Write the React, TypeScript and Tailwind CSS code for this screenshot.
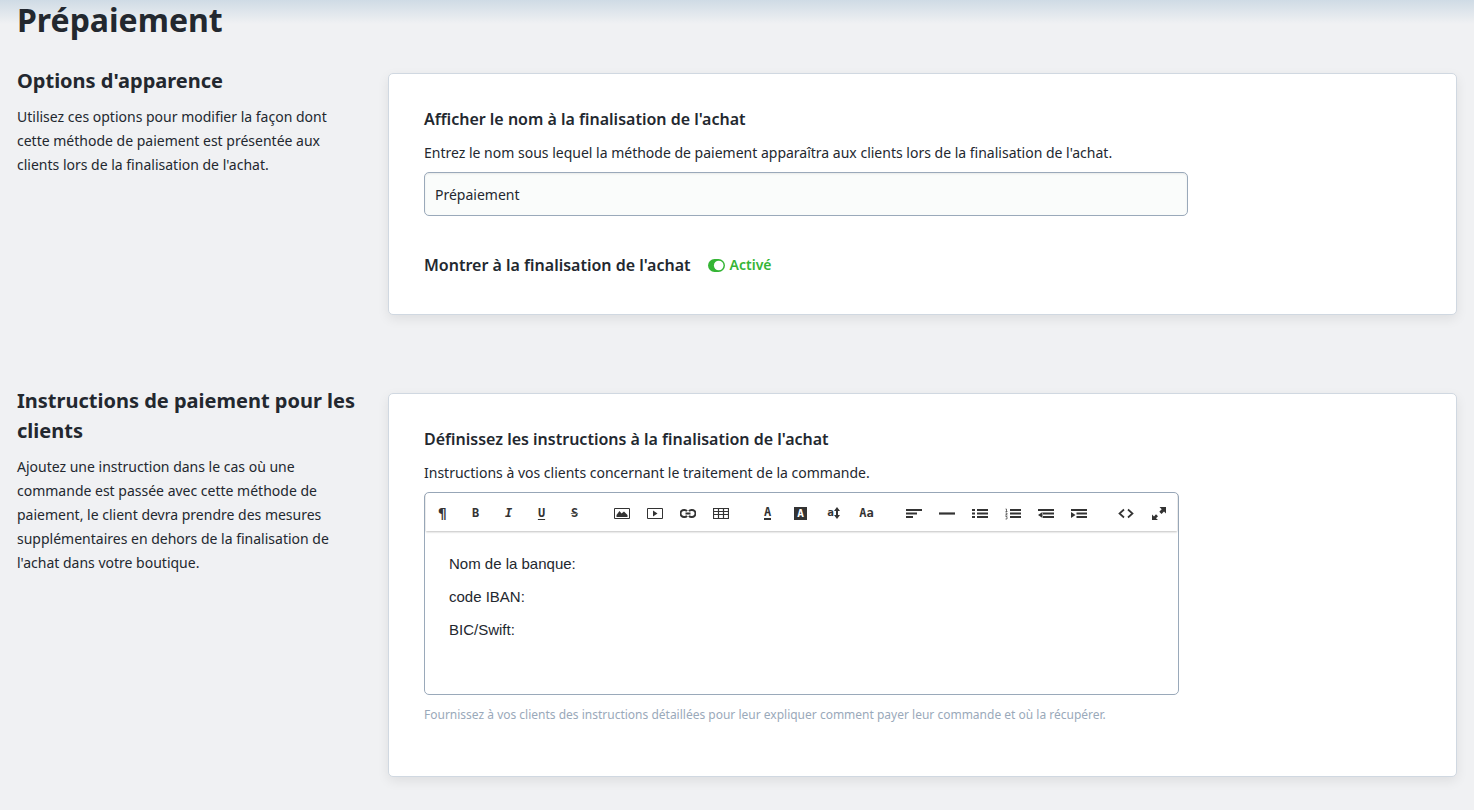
import React from 'react';

type BlocProps = {
  titre: string;
  description: string;
  children: React.ReactNode;
};

function Bloc({ titre, description, children }: BlocProps) {
  return (
    <section className="flex flex-col gap-4 lg:flex-row lg:gap-6">
      <div className="shrink-0 lg:w-[347px]">
        <h2 className="mt-[-7px] text-[20px] font-bold leading-[30px]">{titre}</h2>
        <p className="mt-[9px] pr-4 text-[14px] leading-6">{description}</p>
      </div>
      <div className="min-w-0 flex-1 rounded-[5px] border border-[#d0d8e1] bg-white px-[35px] pt-[33px] shadow-[0_4px_12px_rgba(0,0,0,0.08)]">
        {children}
      </div>
    </section>
  );
}

function Icone({ children }: { children: React.ReactNode }) {
  return (
    <svg className="h-4 w-4" viewBox="0 0 16 16" fill="none" stroke="#333" aria-hidden="true">
      {children}
    </svg>
  );
}

const mono = "font-['DejaVu_Sans_Mono',monospace] font-bold";

const groupes = [
  [
    { nom: 'Format', icone: <span className={`${mono} text-[14px] leading-4`}>¶</span> },
    { nom: 'Gras', icone: <span className={`${mono} text-[12px] leading-4`}>B</span> },
    { nom: 'Italique', icone: <span className={`${mono} text-[12px] leading-4 italic`}>I</span> },
    { nom: 'Souligné', icone: <span className={`${mono} text-[12px] leading-4 underline underline-offset-2`}>U</span> },
    {
      nom: 'Barré',
      icone: <span className={`${mono} text-[12px] leading-4 line-through decoration-[#777] decoration-1`}>S</span>,
    },
  ],
  [
    {
      nom: 'Image',
      icone: (
        <Icone>
          <path d="M.5 3.500h15v10H.5z" />
          <path d="M2.500 12v-2l3-4 2 2.500L10 6.500l3.500 3.500v2z" fill="#333" stroke="none" />
        </Icone>
      ),
    },
    {
      nom: 'Vidéo',
      icone: (
        <Icone>
          <path d="M.5 3.500h15v10H.5z" />
          <path d="M6 5.500v6l4.500-3z" fill="#333" stroke="none" />
        </Icone>
      ),
    },
    {
      nom: 'Lien',
      icone: (
        <Icone>
          <path
            d="M7 6.200A3 3 0 0 0 4.500 5h-.5a3.500 3.500 0 0 0 0 7h.5A3 3 0 0 0 7 10.800M9 6.200A3 3 0 0 1 11.500 5h.5a3.500 3.500 0 0 1 0 7h-.5A3 3 0 0 1 9 10.800M5.500 8.500h5"
            strokeWidth="2"
          />
        </Icone>
      ),
    },
    {
      nom: 'Tableau',
      icone: (
        <Icone>
          <path d="M.5 3.500h15v10H.5zM.5 6.500h15M.5 9.500h15M5.500 3v11M10.500 3v11" strokeWidth="1.200" />
        </Icone>
      ),
    },
  ],
  [
    {
      nom: 'Couleur du texte',
      icone: <span className={`${mono} border-b-2 border-[#333] text-[12px] leading-[11px]`}>A</span>,
    },
    {
      nom: 'Couleur du fond',
      icone: <span className={`${mono} bg-[#333] px-[3px] text-[11px] leading-[13px] text-white`}>A</span>,
    },
    {
      nom: 'Taille',
      icone: (
        <span className={`${mono} flex items-center text-[11px] leading-4`}>
          a
          <svg className="h-3 w-[6px]" viewBox="0 0 6 12" fill="#333" aria-hidden="true">
            <path d="M3 0l3 4H4v4h2l-3 4-3-4h2V4H0z" />
          </svg>
        </span>
      ),
    },
    { nom: 'Casse', icone: <span className={`${mono} text-[12px] leading-4`}>Aa</span> },
  ],
  [
    {
      nom: 'Alignement',
      icone: (
        <Icone>
          <path d="M0 5h16M0 8.500h11M0 12h7" strokeWidth="2.200" />
        </Icone>
      ),
    },
    {
      nom: 'Ligne',
      icone: (
        <Icone>
          <path d="M0 8.500h16" strokeWidth="2.200" />
        </Icone>
      ),
    },
    {
      nom: 'Liste à puces',
      icone: (
        <Icone>
          <path d="M0 5h3M0 8.500h3M0 12h3M5 5h11M5 8.500h11M5 12h11" strokeWidth="2.200" />
        </Icone>
      ),
    },
    {
      nom: 'Liste numérotée',
      icone: (
        <Icone>
          <path d="M5 5h11M5 8.500h11M5 12h11" strokeWidth="2.200" />
          <path d="M.5 4h1v2.500M.5 6.500h2M.5 8h1.500v1L.5 10h2M.5 11.500H2V14H.500" strokeWidth=".7" />
        </Icone>
      ),
    },
    {
      nom: 'Diminuer le retrait',
      icone: (
        <Icone>
          <path d="M0 5h16M5 8.500h11M5 12h11" strokeWidth="2.200" />
          <path d="M4.500 7v6L0 10z" fill="#333" stroke="none" />
        </Icone>
      ),
    },
    {
      nom: 'Augmenter le retrait',
      icone: (
        <Icone>
          <path d="M0 5h16M5.500 8.500H16M5.500 12H16" strokeWidth="2.200" />
          <path d="M0 7v6l4.500-3z" fill="#333" stroke="none" />
        </Icone>
      ),
    },
  ],
  [
    {
      nom: 'Code source',
      icone: (
        <Icone>
          <path d="M6 4.500l-4.500 4 4.500 4M10 4.500l4.500 4-4.500 4" strokeWidth="1.700" />
        </Icone>
      ),
    },
    {
      nom: 'Plein écran',
      icone: (
        <Icone>
          <path
            d="M8.500 2H15v6.500l-2-2L10.500 9 8.300 6.800 10.700 4.300zM1 9.500l2 2L5 9.300 7 11.300 5 13.300 7 15H1z"
            fill="#333"
            stroke="none"
          />
        </Icone>
      ),
    },
  ],
];

export default function App() {
  return (
    <main className="min-h-screen bg-[#f0f1f3] bg-[linear-gradient(#cfdbe5,#f0f1f3)] bg-[length:100%_24px] bg-no-repeat px-[17px] pb-8 font-['Noto_Sans','Segoe_UI',sans-serif] text-[#23282f]">
      <h1 className="text-[32px] font-bold leading-[40px]">Prépaiement</h1>

      <div className="mt-[33px] flex flex-col gap-[78px]">
        <Bloc
          titre="Options d'apparence"
          description="Utilisez ces options pour modifier la façon dont cette méthode de paiement est présentée aux clients lors de la finalisation de l'achat."
        >
          <label htmlFor="nom" className="block text-[16px] font-semibold leading-6">
            Afficher le nom à la finalisation de l'achat
          </label>
          <p className="mt-[10px] text-[14px] leading-6">
            Entrez le nom sous lequel la méthode de paiement apparaîtra aux clients lors de la finalisation de l'achat.
          </p>
          <input
            id="nom"
            type="text"
            defaultValue="Prépaiement"
            className="mt-[7px] block h-11 w-full max-w-[764px] rounded-[5px] border border-[#9aa9ba] bg-[#fafcfb] px-[10px] text-[14px] shadow-[inset_0_1px_2px_rgba(0,0,0,0.08)]"
          />
          <div className="my-[37px] flex items-center gap-[17px]">
            <span className="text-[16px] font-semibold leading-6">Montrer à la finalisation de l'achat</span>
            <label className="flex items-center gap-[5px] text-[14px] font-semibold leading-6 text-[#35b535]">
              <input type="checkbox" defaultChecked className="sr-only" />
              <svg className="h-[13px] w-[17px]" viewBox="0 0 17 13" aria-hidden="true">
                <rect width="17" height="13" rx="6.500" fill="#35b535" />
                <circle cx="10.700" cy="6.500" r="4.800" fill="#fff" />
              </svg>
              Activé
            </label>
          </div>
        </Bloc>

        <Bloc
          titre="Instructions de paiement pour les clients"
          description="Ajoutez une instruction dans le cas où une commande est passée avec cette méthode de paiement, le client devra prendre des mesures supplémentaires en dehors de la finalisation de l'achat dans votre boutique."
        >
          <label htmlFor="instructions" className="block text-[16px] font-semibold leading-6">
            Définissez les instructions à la finalisation de l'achat
          </label>
          <p className="mt-[10px] text-[14px] leading-6">
            Instructions à vos clients concernant le traitement de la commande.
          </p>
          <div className="mt-[7px] max-w-[755px] rounded-[5px] border border-[#9aa9ba]">
            <div className="mx-px flex min-h-[38px] flex-wrap items-center gap-[14px] pt-[2px] shadow-[0_1px_2px_rgba(0,0,0,0.25)]">
              {groupes.map((groupe, i) => (
                <div key={i} className="flex">
                  {groupe.map((outil) => (
                    <button
                      key={outil.nom}
                      type="button"
                      aria-label={outil.nom}
                      className="flex h-8 w-[33px] items-center justify-center text-[#333]"
                    >
                      {outil.icone}
                    </button>
                  ))}
                </div>
              ))}
            </div>
            <textarea
              id="instructions"
              defaultValue={'Nom de la banque:\ncode IBAN:\nBIC/Swift:'}
              className="block h-[163px] w-full resize-none px-6 pt-4 font-['Liberation_Sans',Arial,sans-serif] text-[15px] leading-[33px] outline-none"
            />
          </div>
          <p className="mt-2 mb-[49px] text-[12px] leading-6 text-[#9aa9ba]">
            Fournissez à vos clients des instructions détaillées pour leur expliquer comment payer leur commande et où la
            récupérer.
          </p>
        </Bloc>
      </div>
    </main>
  );
}
